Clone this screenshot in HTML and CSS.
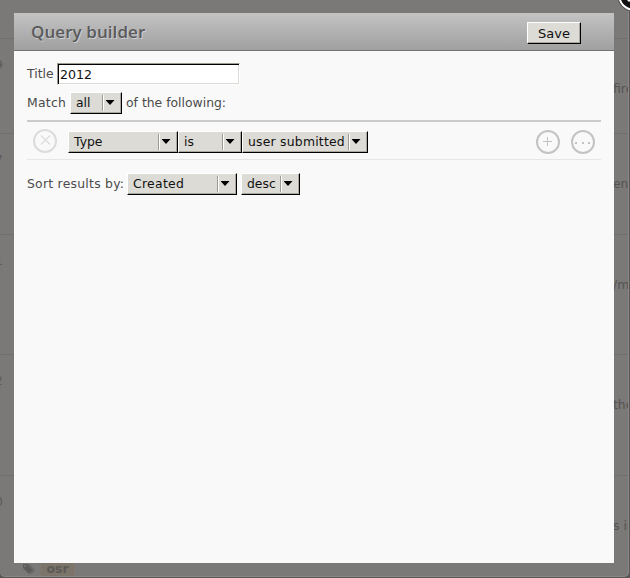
FILE: index.html
```html
<!DOCTYPE html>
<html lang="en">
<head>
<meta charset="utf-8">
<title>Query builder</title>
<link rel="stylesheet" href="styles.css">
</head>
<body>
<main class="page">
  <div class="entry entry-head"></div>
  <div class="entry entry-a"><span class="num">9</span><span class="snippet">fire</span></div>
  <div class="entry entry-b"><span class="num">7</span><span class="snippet">en</span></div>
  <div class="entry entry-c"><span class="num">1</span><span class="snippet">/m</span></div>
  <div class="entry entry-d"><span class="num">2</span><span class="snippet">the</span></div>
  <div class="entry entry-e"><span class="num">0</span><span class="snippet">s in</span></div>
  <div class="tags">
    <svg class="tag-icon" width="13" height="12" viewBox="0 0 13 12"><path d="M0 1h4l6 6-4 4-6-6zM5 1h1l6 6-4 4-.6-.6L11 7z" fill="#5d5b59"/><circle cx="2" cy="3" r="1" fill="#7b7977"/></svg>
    <span class="tag">osr</span>
  </div>
</main>
<section class="modal">
  <header class="modal-head"><h1>Query builder</h1><button class="save">Save</button></header>
  <div class="modal-body">
    <div class="line title-line"><span class="w-title">Title</span><input class="title-input" value="2012"></div>
    <div class="line match-line"><span class="w-match">Match</span><div class="select s-all"><span>all</span><i></i></div><span class="w-follow">of the following:</span></div>
    <div class="rule">
      <svg class="remove" width="24" height="24" viewBox="0 0 24 24" fill="none" stroke="#dcdcdc"><circle cx="12" cy="12" r="11" stroke-width="2"/><path d="M8 6.500l9 9M17 6.500l-9 9" stroke-width="1.200"/></svg>
      <div class="select s-type"><span>Type</span><i></i></div>
      <div class="select s-is"><span>is</span><i></i></div>
      <div class="select s-user"><span>user submitted</span><i></i></div>
      <svg class="add" width="24" height="24" viewBox="0 0 24 24" fill="none" stroke="#c3c3c3"><circle cx="12" cy="12" r="11" stroke-width="2"/><path d="M7 11.500h9M11.500 7v9" stroke-width="1"/></svg>
      <svg class="more" width="24" height="24" viewBox="0 0 24 24"><circle cx="12" cy="12" r="11" fill="none" stroke="#c3c3c3" stroke-width="2"/><path d="M4 12h2v2H4zM11 12h2v2h-2zM17 12h2v2h-2z" fill="#c3c3c3"/></svg>
    </div>
    <div class="line sort-line"><span class="w-sort">Sort results by:</span><div class="select s-created"><span>Created</span><i></i></div><div class="select s-desc"><span>desc</span><i></i></div></div>
  </div>
</section>
<svg class="close" width="32" height="32" viewBox="0 0 32 32"><circle cx="16" cy="16" r="15.500" fill="#55534f"/><circle cx="16" cy="16" r="13.500" fill="#111" stroke="#fff" stroke-width="2"/><path d="M11 11l10 10M21 11l-10 10" stroke="#fff" stroke-width="3"/></svg>
</body>
</html>
```
FILE: styles.css
```css
* { box-sizing: border-box; }
body {
  margin: 0;
  width: 630px;
  height: 578px;
  overflow: hidden;
  background: #595755;
  font: 12.4px/16px "DejaVu Sans", sans-serif;
  color: #4b4b4b;
}
.page {
  width: 629px;
  height: 577px;
  overflow: hidden;
  background: #7b7977;
  border-right: 1px solid #8a8886;
  border-bottom: 1px solid #8a8886;
  border-radius: 0 0 5px 5px;
}
.entry {
  display: flex;
  justify-content: space-between;
  border-bottom: 1px solid #716f6d;
}
.entry-head { height: 39px; }
.entry-a { height: 95px; }
.entry-b { height: 101px; }
.entry-c { height: 120px; }
.entry-d { height: 121px; }
.entry-e { height: 84px; border: 0; }
.num { width: 8px; margin: 18px 0 0 -5px; color: #5d5b59; }
.snippet { width: 15px; margin-top: 42px; white-space: nowrap; color: #555352; }
.tags { display: flex; padding: 0 0 0 23px; align-items: center; }
.tag-icon { margin-right: 5px; }
.tag {
  width: 33px;
  height: 18px;
  border: 1px solid #827663;
  background: #7b746a;
  color: #5c5956;
  font-weight: bold;
  line-height: 16px;
  text-align: center;
}
.modal {
  position: absolute;
  left: 14px;
  top: 13px;
  width: 600px;
  height: 550px;
  background: #f9f9f9;
}
.modal-head {
  display: flex;
  justify-content: space-between;
  height: 38px;
  padding: 9px 33px 0 17px;
  background: linear-gradient(#c3c3c3, #a0a0a0);
  border-bottom: 1px solid #747474;
}
h1 {
  margin: 0;
  color: #5a5a5a;
  font: 600 17px/20px "Open Sans", sans-serif;
  letter-spacing: 0.07px;
  text-shadow: 1px 1px 0 #ccccd2;
}
.save, .select {
  height: 22px;
  background: #dcdbd5;
  border: 1px solid;
  border-color: #fff #000 #000 #fff;
  box-shadow: inset -1px -1px 0 #aaa89e;
  color: #111;
}
.save {
  width: 54px;
  padding: 1px 0 0;
  font: 13px/18px "DejaVu Sans", sans-serif;
}
.modal-body { padding: 12px 13px; }
.line { display: flex; height: 22px; line-height: 22px; white-space: nowrap; }
.title-input {
  width: 183px;
  height: 22px;
  padding: 0 0 0 2px;
  border: 1px solid;
  border-color: #9c9a93 #fff #fff #9c9a93;
  background: #fff;
  box-shadow: inset 1px 1px 0 #000, inset -1px -1px 0 #dcdbd5;
  color: #111;
  font: 12.6px/18px "DejaVu Sans", sans-serif;
}
.w-title { width: 30px; }
.match-line { margin-top: 7px; }
.w-match { width: 43px; letter-spacing: 0.25px; }
.w-follow { margin-left: 4px; }
.select { display: flex; justify-content: space-between; padding-left: 5px; line-height: 20px; white-space: nowrap; }
.select i {
  display: flex;
  justify-content: center;
  align-items: center;
  flex: none;
  width: 19px;
  height: 16px;
  margin-top: 2px;
  border-left: 1px solid #9c9a93;
  box-shadow: inset 1px 0 0 #fff;
}
.select i::before {
  content: "";
  width: 9px;
  height: 5px;
  margin: -1px 4px 0 0;
  background: #000;
  clip-path: polygon(0 0, 100% 0, 50% 100%);
}
.s-all { width: 52px; }
.s-type { width: 110px; }
.s-is { width: 64px; }
.s-user { width: 126px; letter-spacing: 0.22px; }
.s-created { width: 110px; letter-spacing: 0.3px; }
.s-desc { width: 59px; margin-left: 4px; }
.rule {
  display: flex;
  height: 40px;
  margin-top: 6px;
  padding: 9px 6px 0;
  border-top: 2px solid #cbcbcb;
  border-bottom: 1px solid #e6e6e6;
}
.remove { margin: -2px 11px 0 0; }
.add { margin: -1px 11px 0 auto; }
.more { margin-top: -1px; }
.sort-line { margin-top: 13px; }
.w-sort { width: 100px; letter-spacing: 0.25px; }
.close { position: absolute; left: 617px; top: -20px; }
```
